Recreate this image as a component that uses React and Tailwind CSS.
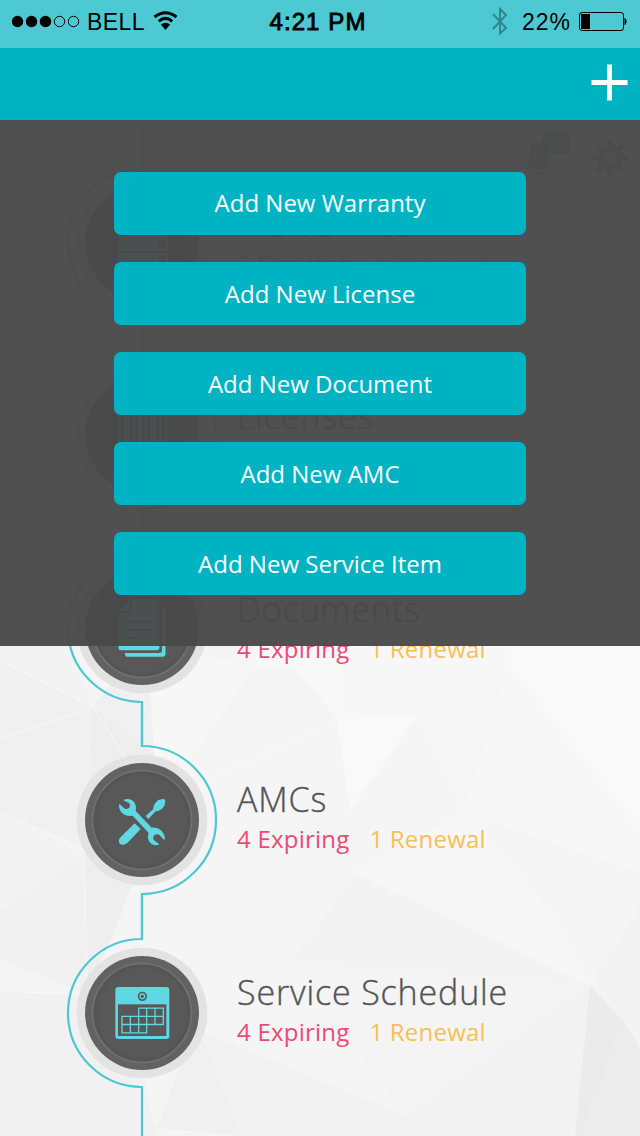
import React from "react";

const facets = [
  ["0,120 150,120 93,430 0,380", "#f1f1f1"],
  ["400,120 640,120 640,420 520,330", "#fafafa"],
  ["0,646 70,646 93,707 0,661", "#f3f3f3"],
  ["0,661 93,707 0,738", "#eeeeee"],
  ["93,707 110,684 150,690 154,755 125,757", "#eeeeee"],
  ["0,738 93,707 90,850 0,812", "#efefef"],
  ["93,707 125,757 84,853 90,840", "#ebebeb"],
  ["93,707 154,755 160,880 131,886 112,938 88,990 85,853", "#ececec"],
  ["0,812 84,853 0,911", "#f3f3f3"],
  ["84,853 87,995 0,960 0,911", "#f0f0f0"],
  ["0,960 87,995 0,991", "#f4f4f4"],
  ["0,991 87,995 140,1060 157,1136 0,1136", "#f0f0f0"],
  ["151,646 255,667 190,760 154,755", "#f9f9f9"],
  ["255,667 294,667 337,719 190,760", "#f4f4f4"],
  ["337,719 350,810 355,872 217,835 190,760", "#f6f6f6"],
  ["255,667 255,646 347,646 337,719 294,667", "#fafafa"],
  ["347,646 510,646 510,667 418,715 337,719", "#f8f8f8"],
  ["337,719 418,715 350,810", "#fcfcfc"],
  ["418,715 510,667 465,812", "#f7f7f7"],
  ["418,715 465,812 355,872 350,810", "#f6f6f6"],
  ["510,646 640,646 640,830 510,667", "#fcfcfc"],
  ["510,667 640,830 465,812", "#f9f9f9"],
  ["465,812 640,872 550,910", "#f5f5f5"],
  ["465,812 640,830 640,872", "#f8f8f8"],
  ["465,812 550,910 590,985 355,872", "#f8f8f8"],
  ["355,872 590,985 292,962", "#f3f3f3"],
  ["217,835 355,872 292,962 200,1000", "#f5f5f5"],
  ["292,962 590,985 408,1117", "#f4f4f4"],
  ["200,1030 408,1117 415,1136 242,1136", "#f2f2f2"],
  ["180,1065 200,1030 242,1136 157,1128", "#efefef"],
  ["590,985 408,1117 415,1136 575,1136", "#f1f1f1"],
  ["590,985 624,1022 580,1136 575,1136", "#e7e7e7"],
  ["624,1022 640,1048 640,1136 580,1136", "#e9e9e9"],
  ["590,985 640,905 640,1048 624,1022", "#f3f3f3"],
];

function Backdrop() {
  return (
    <svg className="absolute inset-0" width="640" height="1136" viewBox="0 0 640 1136">
      <defs>
        <filter id="soft" x="0" y="0" width="1" height="1">
          <feGaussianBlur stdDeviation="0.6" />
        </filter>
      </defs>
      <rect width="640" height="1136" fill="#f5f5f5" />
      <g filter="url(#soft)" opacity="0.7">
        {facets.map(([points, fill]) => (
          <polygon key={points} points={points} fill={fill} />
        ))}
        <path
          d="M0 661L93 707L0 738M93 707L125 757M337 719L418 715L350 810M337 719L190 790M510 667L418 715M355 872L590 985M0 991L87 995"
          fill="none"
          stroke="#fbfbfb"
          strokeWidth="0.8"
        />
      </g>
    </svg>
  );
}

function WarrantyIcon() {
  return (
    <g fill="#60d8e4">
      <rect x="-24" y="-22" width="50" height="12" />
      <rect x="-24" y="-7" width="50" height="15" />
      <rect x="-24" y="10" width="50" height="14" />
      <g fill="#585858">
        <rect x="17" y="-3" width="6" height="7" />
        <rect x="17" y="13" width="6" height="6" />
      </g>
    </g>
  );
}

function BarcodeIcon() {
  return (
    <path
      d="M-24-24h3v48h-3zM-18-24h6v48h-6zM-9-24h2v48h-2zM-4-24h4v48h-4zM3-24h2v48h-2zM8-24h6v48h-6zM17-24h3v48h-3zM22-24h3v48h-3z"
      fill="#60d8e4"
    />
  );
}

function DocumentsIcon() {
  return (
    <g>
      <path d="M-17 26V27Q-16.500 28.700-15 28.700H20.500Q23.500 28.700 23.500 26V-20Q23.500-22 20-22V22.500Q20 25 17 25H-17Z" fill="#60d8e4" />
      <path d="M-10-29H15Q17.500-29 17.500-26.500V19.500Q17.500 22.300 14.500 22.300H-21Q-23.500 22.300-23.500 19.500V-15H-13Q-10-15-10-18Z" fill="#60d8e4" />
      <path d="M-23-17L-12-28V-17Z" fill="#60d8e4" />
      <path d="M-15-6.500H10M-15 2H10M-15 10H-2" stroke="#585858" strokeWidth="2.200" />
    </g>
  );
}

function ToolsIcon() {
  return (
    <g transform="scale(.33333) translate(-276 -270)" fill="#60d8e4">
      <path d="M221 209Q229 206 240 208C254 213 261 228 257 243L305 293C324 290 344 304 345 327L342 329L329 316C323 310 312 314 310 321Q308 327 312 331L328 343Q321 347 312 345C297 340 290 325 296 309L248 257C230 262 208 250 207 229Q207 224 209 222L221 234C228 241 238 236 240 228Q241 222 236 218L222 212Z" />
      <path d="M254 280L272 297L232 339Q224 346 215 344Q205 341 207 330Q208 325 212 321Z" />
      <path d="M287 258L310 237Q308 229 316 219L325 210L340 207Q346 207 346 214L343 228Q330 245 317 244L295 267Z" />
    </g>
  );
}

function CalendarIcon() {
  return (
    <g transform="scale(.33333) translate(-276 -279)">
      <rect x="196" y="201" width="162" height="156" rx="9" fill="#60d8e4" />
      <rect x="204" y="253" width="145" height="95" fill="#585858" />
      <circle cx="277" cy="229" r="11.500" fill="none" stroke="#585858" strokeWidth="5" />
      <circle cx="277" cy="229" r="5" fill="#585858" />
      <path
        d="M266 264.500H340V313.500H216V338.500H290V264.500M216 313.500V289H340M315 264.500V313.500M266 264.500V338.500M241 289V338.500"
        fill="none"
        stroke="#60d8e4"
        strokeWidth="3.800"
      />
    </g>
  );
}

const sections = [
  { title: "Warranties", first: "2 Expiring", second: "2 Renewal", Icon: WarrantyIcon, side: "left", row: "h-[192px]", text: "pt-[54px]" },
  { title: "Licenses", first: "4 Expiring", second: "1 Renewal", Icon: BarcodeIcon, side: "right", row: "h-[193px]", text: "pt-[54px]" },
  { title: "Documents", first: "4 Expiring", second: "1 Renewal", Icon: DocumentsIcon, side: "left", row: "h-[192px]", text: "pt-[54px]" },
  { title: "AMCs", first: "4 Expiring", second: "1 Renewal", Icon: ToolsIcon, side: "right", row: "h-[193px]", text: "pt-[52px]" },
  { title: "Service Schedule", first: "4 Expiring", second: "1 Renewal", Icon: CalendarIcon, side: "left", row: "h-[192px]", text: "pt-[52px]", last: true },
];

function Medallion({ side, Icon, last }) {
  const arc = side === "left" ? "A74 74 0 0 0 0 74" : "A74 74 0 0 1 0 74";
  const tail = last ? "V130" : side === "left" ? "V118" : "V119";
  return (
    <svg className="shrink-0 overflow-visible" width="152" height="192" viewBox="-76 -96 152 192">
      <path d={`M0-118V-74${arc}${tail}`} fill="none" stroke="#4bc8d2" strokeWidth="2.200" />
      <circle r="65.300" fill="#e3e3e3" />
      <circle r="57" fill="#626262" />
      <circle r="49.500" fill="url(#dish)" stroke="#6e6e6e" strokeWidth="2" />
      <Icon />
    </svg>
  );
}

function SectionRow({ title, first, second, Icon, side, row, text, last }) {
  return (
    <li className={`flex ${row}`}>
      <Medallion side={side} Icon={Icon} last={last} />
      <div className={`pl-[19px] ${text}`}>
        <h2 className="text-[34px] leading-[46px] font-light tracking-[0.85px] whitespace-nowrap text-[#555555] [-webkit-text-stroke:0.4px_#555555]">{title}</h2>
        <p className="flex gap-[20px] text-[24px] leading-[34px] tracking-[0.22px] whitespace-nowrap">
          <span className="text-[#ec4a74]">{first}</span>
          <span className="text-[#f5c056]">{second}</span>
        </p>
      </div>
    </li>
  );
}

function StatusBar() {
  return (
    <div className="flex h-12 items-start bg-[#4dc9d3] font-['Liberation_Sans',sans-serif] text-[23px] leading-[44px] text-black">
      <div className="flex w-[213px] items-center pl-3">
        <svg width="68" height="44" viewBox="0 0 68 44">
          <circle cx="5.500" cy="21.500" r="5.700" />
          <circle cx="19.500" cy="21.500" r="5.700" />
          <circle cx="33.500" cy="21.500" r="5.700" />
          <circle cx="47.500" cy="21.500" r="5.200" fill="none" stroke="#000" />
          <circle cx="61.500" cy="21.500" r="5.200" fill="none" stroke="#000" />
        </svg>
        <span className="w-[58px] pl-[7px] tracking-[0.4px]">BELL</span>
        <svg className="ml-[15px]" width="26" height="44" viewBox="0 0 26 44">
          <path d="M1.500 17Q12.500 8.500 23.500 17M5.800 21.300Q12.500 15.500 19.200 21.300" fill="none" stroke="#000" strokeWidth="3" />
          <path d="M7.800 24.600Q12.500 21 17.200 24.600L12.500 30Z" />
        </svg>
      </div>
      <div className="w-[214px] pr-1 text-center text-[24px] tracking-[1.1px] [-webkit-text-stroke:0.9px_#000]">4:21 PM</div>
      <div className="flex w-[213px] items-center justify-end pr-3">
        <svg width="18" height="44" viewBox="0 0 18 44">
          <path d="M2 14L15 28L9 33.500V9L15 15L2 29" fill="none" stroke="#2f8790" strokeWidth="2" />
        </svg>
        <span className="ml-[13px] w-[49px] text-[23px] tracking-[0.9px]">22%</span>
        <svg className="ml-[7px]" width="50" height="44" viewBox="0 0 50 44">
          <rect x="1.500" y="12.500" width="44" height="18" rx="2.500" fill="none" stroke="#000" />
          <rect x="3" y="14" width="9" height="15" />
          <path d="M47 18.500Q49.500 21.500 47 24.500Z" stroke="#000" />
        </svg>
      </div>
    </div>
  );
}

function NavBar() {
  return (
    <div className="flex h-[72px] items-start justify-end bg-[#00b3c2] pt-4 pr-3">
      <button aria-label="Add" className="block">
        <svg width="37" height="37" viewBox="0 0 37 37">
          <path d="M.5 18.500H36.500M18.500.5V36.500" stroke="#fff" strokeWidth="5" />
        </svg>
      </button>
    </div>
  );
}

function Shortcuts() {
  return (
    <div className="absolute top-[10px] right-[10px]">
      <svg width="110" height="52" viewBox="0 0 110 52">
        <path d="M4 39Q9 33 9 25Q9 13 18 12Q28 13 28 25Q28 33 34 39ZM13 41H24Q23 46 18.500 46T13 41Z" fill="#8c8c8c" />
        <rect x="22" y="2" width="28" height="22" rx="4" fill="#4aa9b4" />
        <text x="36" y="18" textAnchor="middle" fontSize="12" fontWeight="700" fill="#d5eef1" fontFamily="Open Sans">
          100
        </text>
        <circle cx="90" cy="28" r="9.500" fill="none" stroke="#8c8c8c" strokeWidth="7" />
        <path d="M90 10V18M90 38V46M72 28H80M100 28H108M77.300 15.300L83 21M97 35L102.700 40.700M77.300 40.700L83 35M97 21L102.700 15.300" stroke="#8c8c8c" strokeWidth="6" />
      </svg>
    </div>
  );
}

const actions = ["Add New Warranty", "Add New License", "Add New Document", "Add New AMC", "Add New Service Item"];

export default function App() {
  return (
    <div className="relative h-[1136px] w-[640px] overflow-hidden bg-[#f5f5f5] font-['Open_Sans',sans-serif]">
      <Backdrop />
      <div className="relative">
        <header>
          <StatusBar />
          <NavBar />
        </header>
        <main className="relative h-[1016px] overflow-hidden">
          <svg className="absolute" width="0" height="0">
            <defs>
              <radialGradient id="dish">
                <stop offset="0.88" stopColor="#585858" />
                <stop offset="1" stopColor="#525252" />
              </radialGradient>
            </defs>
          </svg>
          <Shortcuts />
          <ul className="pt-[27px] pl-[66px]">
            {sections.map((section) => (
              <SectionRow key={section.title} {...section} />
            ))}
          </ul>
          <div className="absolute inset-x-0 top-0 flex h-[526px] flex-col items-center gap-[27px] bg-[#494949]/96 pt-[52px]">
            {actions.map((label) => (
              <button key={label} className="h-[63px] w-[412px] shrink-0 rounded-[7px] bg-[#00b3c2] text-[24px] leading-[61px] text-white first:pb-[2px]">
                {label}
              </button>
            ))}
          </div>
        </main>
      </div>
    </div>
  );
}
